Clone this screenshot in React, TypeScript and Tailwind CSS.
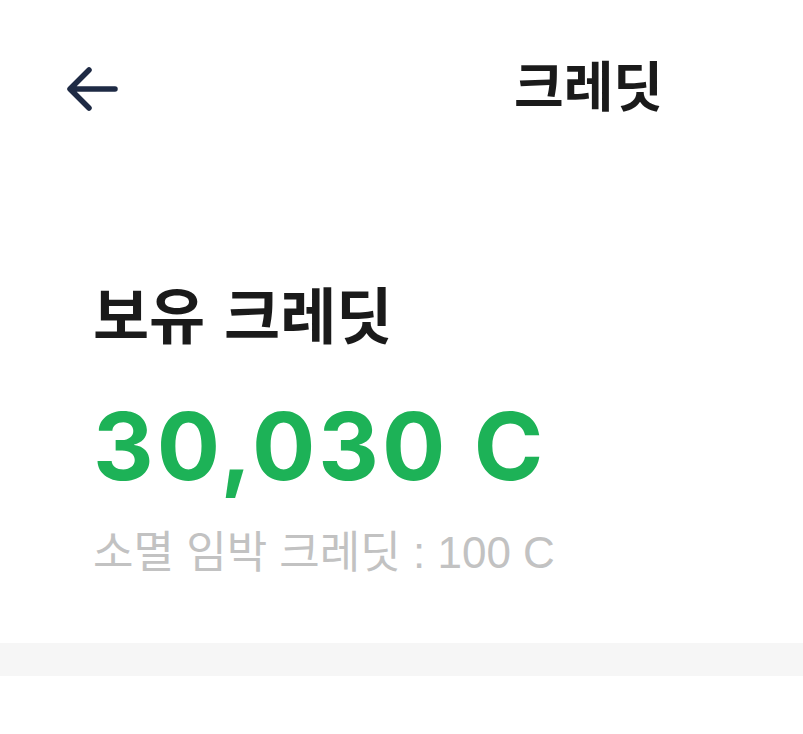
export default function App() {
  return (
    <div className="w-[803px] h-[734px] bg-white flex flex-col font-['Liberation_Sans','Noto_Sans_CJK_KR',sans-serif]">
      <header className="h-[180px] flex items-start pt-[66px] pl-[66px]">
        <svg width="52" height="46" viewBox="0 0 52 46" fill="none" className="text-[#1e2a44]">
          <path d="M49 23H5M23 4L4 23l19 19" stroke="currentColor" strokeWidth="5.5" strokeLinecap="round" strokeLinejoin="round" />
        </svg>
        <h1 className="ml-[396px] -mt-[23px] text-[54px] font-bold text-[#1a1a1a] font-['Noto_Sans_CJK_KR',sans-serif]">
          크레딧
        </h1>
      </header>
      <section className="px-[93px] pt-[102px] h-[463px]">
        <h2 className="text-[61px] leading-none font-bold text-[#1a1a1a] [word-spacing:5px] font-['Noto_Sans_CJK_KR',sans-serif]">
          보유 크레딧
        </h2>
        <p className="mt-[56px] text-[94px] leading-none font-bold text-[#1db257] tracking-[3px] font-['Inter','Liberation_Sans',sans-serif]">
          30,030 C
        </p>
        <p className="mt-[38px] text-[44px] leading-none text-[#c2c2c2]">
          소멸 임박 크레딧 : 100 C
        </p>
      </section>
      <div className="h-[33px] bg-[#f6f6f6]" />
    </div>
  );
}
